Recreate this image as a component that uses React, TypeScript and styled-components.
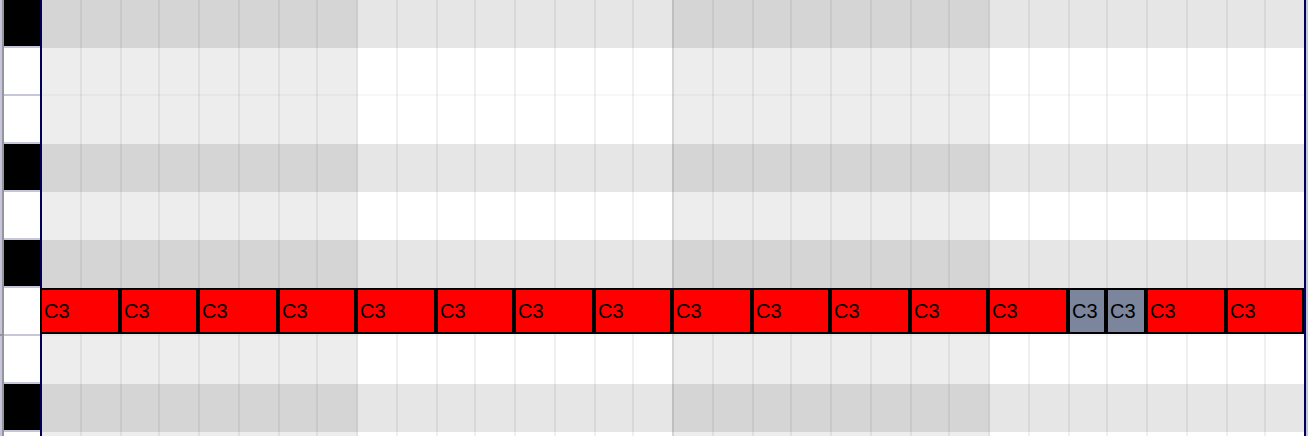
import React from "react";
import styled, { createGlobalStyle } from "styled-components";

const GlobalStyle = createGlobalStyle`
  *, *::before, *::after { box-sizing: border-box; }
  body {
    margin: 0;
    background: #c5c7d8;
    font-family: "Liberation Sans", Arial, sans-serif;
    overflow: hidden;
  }
`;

const Editor = styled.main`
  display: flex;
  height: 100vh;
  padding: 0 2px;
  overflow: hidden;
`;

const Keyboard = styled.div`
  flex: none;
  width: 38px;
  border-left: 2px solid #98949f;
`;

const Key = styled.div<{ $black: boolean; $octave: boolean }>`
  position: relative;
  height: 48px;
  border-bottom: 2px solid #c5c7d8;
  background: ${(p) => (p.$black ? "#000" : "#fff")};

  /* tick that marks the start of an octave */
  &::before {
    content: "";
    display: ${(p) => (p.$octave ? "block" : "none")};
    position: absolute;
    left: -4px;
    bottom: -2px;
    width: 4px;
    height: 2px;
    background: #98949f;
  }
`;

const Roll = styled.div`
  flex: 1;
  display: grid;
  grid-template-columns: minmax(0, 1fr);
  align-content: start;
  border-right: 2px solid #000060;

  & > * {
    grid-area: 1 / 1;
  }
`;

const Lanes = styled.div`
  display: flex;
  flex-direction: column;
`;

const Lane = styled.div<{ $black: boolean; $divider: boolean }>`
  height: 48px;
  background: ${(p) => (p.$black ? "#e6e6e6" : "#fff")};
  border-bottom: ${(p) => (p.$divider ? "2px solid #f8f8f8" : "0")};
`;

const Steps = styled.div`
  display: grid;
  grid-template-columns: repeat(4, 40fr 40fr 38fr 40fr 40fr 40fr 38fr 40fr);
`;

const StepLines = styled(Steps)`
  box-shadow: inset 2px 0 #000060;
`;

const Step = styled.div<{ $shaded: boolean; $line: string }>`
  background: ${(p) => (p.$shaded ? "rgba(0, 0, 0, 0.07)" : "transparent")};
  border-left: 2px solid ${(p) => p.$line};
`;

const NoteTrack = styled(Steps)`
  position: relative;
  z-index: 1;
  height: 46px;
`;

const Note = styled.button<{ $steps: number; $muted: boolean }>`
  grid-column: span ${(p) => p.$steps};
  min-width: 0;
  padding: 0 0 0 2px;
  border: 2px solid #000;
  border-radius: 0;
  background: ${(p) => (p.$muted ? "#7b869d" : "#f00")};
  color: #000;
  font: 20px/40px "Liberation Sans", Arial, sans-serif;
  text-align: left;
`;

const keys = [
  { name: "F#3", black: true },
  { name: "F3", black: false },
  { name: "E3", black: false },
  { name: "D#3", black: true },
  { name: "D3", black: false },
  { name: "C#3", black: true },
  { name: "C3", black: false },
  { name: "B2", black: false },
  { name: "A#2", black: true },
  { name: "A2", black: false },
];

const noteSteps = [2, 2, 2, 2, 2, 2, 2, 2, 2, 2, 2, 2, 2, 1, 1, 2, 2];

const stepLine = (step: number) => {
  if (step === 0) return "transparent";
  if (step % 16 === 0) return "rgba(0, 0, 0, 0.1)";
  if (step % 8 === 0) return "rgba(0, 0, 0, 0.11)";
  return "rgba(0, 0, 0, 0.06)";
};

export default function App() {
  return (
    <>
      <GlobalStyle />
      <Editor>
        <Keyboard>
          {keys.map((k) => (
            <Key key={k.name} $black={k.black} $octave={k.name === "C3"} />
          ))}
        </Keyboard>
        <Roll>
          <Lanes>
            {keys.map((k, i) => (
              <Lane
                key={k.name}
                $black={k.black}
                $divider={!k.black && i + 1 < keys.length && !keys[i + 1].black}
              >
                {k.name === "C3" && (
                  <NoteTrack>
                    {noteSteps.map((steps, n) => (
                      <Note key={n} $steps={steps} $muted={steps === 1}>
                        C3
                      </Note>
                    ))}
                  </NoteTrack>
                )}
              </Lane>
            ))}
          </Lanes>
          <StepLines>
            {Array.from({ length: 32 }, (_, s) => (
              <Step key={s} $shaded={s % 16 < 8} $line={stepLine(s)} />
            ))}
          </StepLines>
        </Roll>
      </Editor>
    </>
  );
}
